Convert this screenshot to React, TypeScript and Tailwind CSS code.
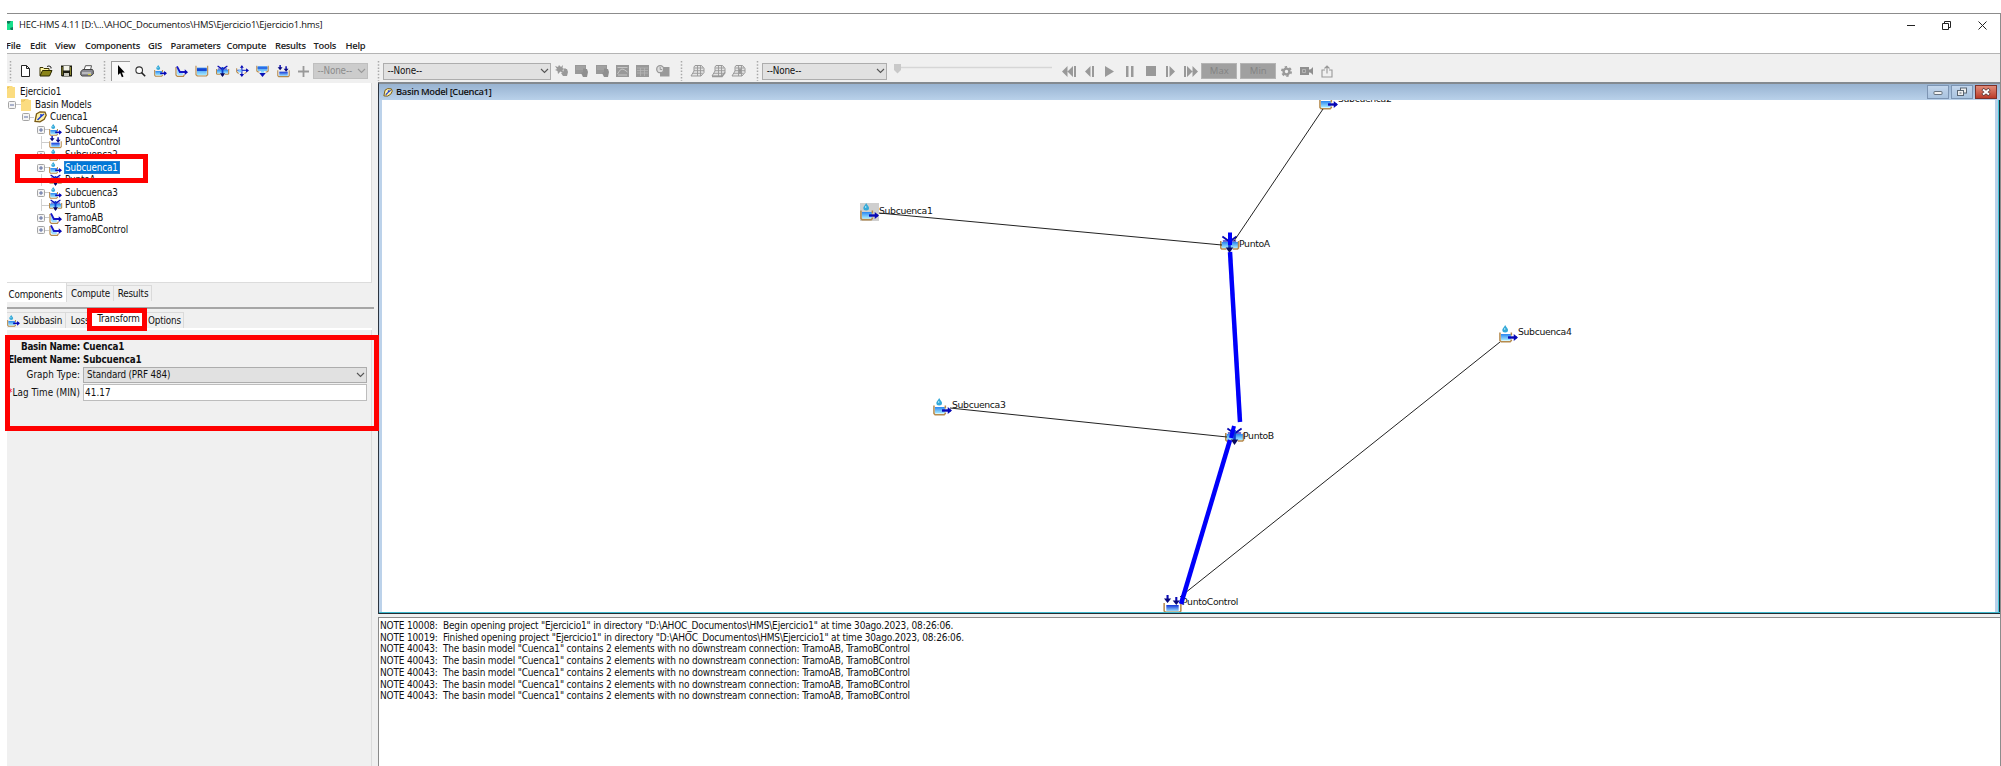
import React from "react";

const TAHOMA = "font-['DejaVu_Sans_Condensed','DejaVu_Sans',sans-serif] [font-stretch:condensed]";
const SEGOE = "font-['Open_Sans','Noto_Sans',sans-serif]";

type Kind = "subbasin" | "reach" | "reservoir" | "junction" | "diversion" | "source" | "sink";

function Defs() {
  return (
    <svg width="0" height="0" className="absolute">
      <defs>
        <linearGradient id="water" x1="0" y1="0" x2="0" y2="1">
          <stop offset="0" stopColor="#2a86f0" />
          <stop offset="1" stopColor="#a8ecff" />
        </linearGradient>
        <linearGradient id="deep" x1="0" y1="0" x2="0" y2="1">
          <stop offset="0" stopColor="#1233d8" />
          <stop offset="1" stopColor="#9fe4ff" />
        </linearGradient>
      </defs>
    </svg>
  );
}

function HydroIcon({ kind, w, h }: { kind: Kind; w: number; h: number }) {
  const tan = "#b58a4c";
  const navy = "#0808b4";
  return (
    <svg width={w} height={h} viewBox="0 0 20 18" preserveAspectRatio="none" className="block shrink-0 overflow-visible">
      {kind === "subbasin" && (
        <>
          <path d="M6.5 0C8 2.500 9.500 3.500 9.500 5a3 2.500 0 0 1-6 0C3.500 3.500 5 2.500 6.500 0Z" fill="#35a9d8" />
          <path d="M6 3.200v1.500" stroke="#c8f4ff" strokeWidth="1.200" />
          <rect x="2" y="9" width="10.500" height="6.500" fill="url(#water)" />
          <path d="M1 7.500v8l1.200 1.300h9.600l1.200-1.300v-1M13 7.500v3" fill="none" stroke={tan} strokeWidth="1.600" />
          <path d="M9.500 12.500h9" stroke={navy} strokeWidth="2.400" />
          <path d="M15.500 9l4.500 3.500-4.500 3.500Z" fill={navy} />
        </>
      )}
      {kind === "reach" && (
        <>
          <path d="M1.500 3v12l2 2h9.500l1.500-2.500" fill="none" stroke={tan} strokeWidth="1.800" />
          <path d="M3 3l4 7h5v5.500H5L3 13Z" fill="#9fdcff" />
          <path d="M3 2l4.500 8.500H18" fill="none" stroke="#1616c8" strokeWidth="2.800" />
          <path d="M15 6.500l5 4.200-5 4.200Z" fill={navy} />
        </>
      )}
      {kind === "reservoir" && (
        <>
          <rect x="3" y="4" width="15" height="11.500" fill="url(#water)" />
          <rect x="3" y="5" width="15" height="4" fill="#1746d0" />
          <path d="M1.500 1v13.500l2 2h14l2-2V1" fill="none" stroke={tan} strokeWidth="1.700" />
        </>
      )}
      {kind === "junction" && (
        <>
          <rect x="1.500" y="7" width="17.500" height="6" fill="url(#water)" />
          <path d="M.8 6v7l1 1h5M19.500 6v7l-1 1h-5" fill="none" stroke={tan} strokeWidth="1.600" />
          <path d="M2.500 1.500l7.500 5 7.500-5" fill="none" stroke={navy} strokeWidth="2" />
          <path d="M3 6h14" stroke={navy} strokeWidth="1.200" />
          <path d="M10 3v13" stroke="#0c3fd0" strokeWidth="2.800" />
          <path d="M6 12.500h8L10 18Z" fill="#080860" />
        </>
      )}
      {kind === "diversion" && (
        <>
          <path d="M9 1v15M2 8h16" stroke="#2c43cf" strokeWidth="2" />
          <path d="M6 4L9 .5l3 3.500M5.500 13.500h7L9 18ZM15.500 4.800l4.500 3.400-4.500 3.400Z" fill={navy} />
          <path d="M1 5v5l3 3M13 13l3-2" fill="none" stroke={tan} strokeWidth="1.600" />
          <rect x="3.500" y="7" width="5" height="4" fill="#7fc8ff" />
        </>
      )}
      {kind === "source" && (
        <>
          <path d="M2.500 2h15v7h-5v3h-5V9h-5Z" fill="url(#water)" />
          <path d="M2.500 3h15v3h-15Z" fill="#2c6de8" />
          <path d="M1.200 1v8l2 1.500h2M18.800 1v8l-2 1.500h-2" fill="none" stroke={tan} strokeWidth="1.600" />
          <path d="M5 12h10l-5 6Z" fill="#0a12b8" />
        </>
      )}
      {kind === "sink" && (
        <>
          <rect x="3.500" y="10" width="13" height="6.500" fill="url(#deep)" />
          <path d="M1.200 8v8l1.500 1.400h14.600l1.500-1.400V8" fill="none" stroke={tan} strokeWidth="1.600" />
          <path d="M4.800 0v5M14 2v5" stroke={navy} strokeWidth="2.200" />
          <path d="M1 3.500h7.600L4.800 8ZM10.200 5.500h7.600L14 10Z" fill="#07077c" />
        </>
      )}
    </svg>
  );
}

function Grip() {
  return (
    <svg width="3" height="22" className="block shrink-0">
      <path d="M1.500 1v20" stroke="#a9a9a9" strokeWidth="1.500" strokeDasharray="1.500 1.700" />
    </svg>
  );
}

function Cell({ children, w = "w-[20.300px]" }: { children: React.ReactNode; w?: string }) {
  return <div className={`flex h-[20px] shrink-0 items-center justify-center ${w}`}>{children}</div>;
}

function Chevron({ color }: { color: string }) {
  return (
    <svg width="9" height="6" className="block shrink-0">
      <path d="M1 1l3.500 3.500L8 1" fill="none" stroke={color} strokeWidth="1.100" />
    </svg>
  );
}

function Combo({ w, className = "" }: { w: string; className?: string }) {
  return (
    <div className={`flex h-[17px] shrink-0 items-center justify-between border border-[#adadad] bg-[#e1e1e1] pl-[3.500px] pr-[1px] text-[#111] ${w} ${className}`}>
      <span className={`${TAHOMA} text-[9.800px] tracking-[-0.150px]`}>--None--</span>
      <Chevron color="#555" />
    </div>
  );
}

const G = "#999";

function Toolbar() {
  const kinds: Kind[] = ["subbasin", "reach", "reservoir", "junction", "diversion", "source", "sink"];
  return (
    <div className="flex h-[29px] items-center bg-[#f0f0f0] pt-[5px]">
      <div className="flex w-[369.500px] shrink-0 items-center pl-[1.500px]">
        <Grip />
        <div className="w-[4px]" />
        <Cell>
          <svg width="9" height="12"><path d="M.5.5h5l3 3v8h-8ZM5.500.5v3h3" fill="#fff" stroke="#222" /></svg>
        </Cell>
        <Cell w="w-[20.800px]">
          <svg width="14" height="12"><path d="M1 10.500v-8h3l1 1h5v2" fill="#fff6a0" stroke="#3a3300" /><path d="M1 11l2.500-5.500H13L10.500 11Z" fill="#8a8418" stroke="#2b2800" /><path d="M8 1.500q2-1.500 4 .5v1.500" fill="none" stroke="#222" /></svg>
        </Cell>
        <Cell>
          <svg width="11" height="12"><path d="M0 .5h11v11H1L0 10.500Z" fill="#1c1c12" /><rect x="2.500" y="1" width="6" height="4.500" fill="#f3f3e8" /><rect x="3" y="8" width="5" height="3" fill="#c9c9c0" /><path d="M9.500 2v8M1.200 2v8" stroke="#8b8730" /></svg>
        </Cell>
        <Cell>
          <svg width="14" height="12"><path d="M4 5L5.500 .7h6L10.500 5" fill="#fff" stroke="#555" /><path d="M.8 6.500L3 4.500h9.500L13.300 6v3l-2.500 2H2L.8 10Z" fill="#8a8a92" stroke="#444" /><path d="M2 8h9" stroke="#e8e8e8" /><path d="M8 9.500h3" stroke="#d4cf40" strokeWidth="1.200" /></svg>
        </Cell>
        <div className="w-[6px]" />
        <Grip />
        <div className="w-[4.500px]" />
        <div className="flex h-[20px] w-[19px] shrink-0 items-center justify-center border-l border-t border-[#9a9a9a] bg-[#f8f8f8]">
          <svg width="8" height="13"><path d="M1 0v10l2.200-2 1.700 4.300 1.600-.7L4.800 7.500h3Z" fill="#000" /></svg>
        </div>
        <Cell w="w-[21px]">
          <svg width="11" height="11"><circle cx="4.200" cy="4.200" r="3.300" fill="#fdfdfd" stroke="#333" strokeWidth="1.100" /><path d="M6.600 6.600l3.600 3.600" stroke="#222" strokeWidth="1.500" /></svg>
        </Cell>
        {kinds.map((k) => (
          <Cell key={k} w="w-[20.400px]"><HydroIcon kind={k} w={13} h={12} /></Cell>
        ))}
        <Cell w="w-[20px]">
          <svg width="11" height="11"><path d="M5.500 0v11M0 5.500h11" stroke={G} strokeWidth="1.800" /></svg>
        </Cell>
        <div className="flex h-[16px] w-[55px] shrink-0 items-center justify-between border border-[#bfbfbf] bg-[#cccccc] pl-[3px] pr-[1px] text-[#8b8b8b]">
          <span className={`${TAHOMA} text-[9.800px] tracking-[-0.150px]`}>--None--</span>
          <Chevron color="#999" />
        </div>
      </div>
      <Grip />
      <div className="w-[3.500px]" />
      <Combo w="w-[168px]" />
      <div className="w-[.5px]" />
      <Cell>
        <svg width="14" height="12"><path d="M0 1l3 1 1-2 2 2 2-2-.5 3 2 1-2 1 1 3-3-1.500L3 9l-.5-3L0 5l2-1Z" fill={G} /><path d="M9 4l1-1 1 1h1l1 3-1 4H8L6 8l2-1Z" fill={G} /></svg>
      </Cell>
      {[0, 1].map((i) => (
        <Cell key={i}>
          <svg width="13" height="12"><rect y="0" width="11" height="9" fill={G} /><path d="M1 2h9M1 4h9" stroke="#bbb" strokeWidth=".6" /><path d="M6 8l2-1V4l1-1 1 1h2l1 3-1 5H8Z" fill="#8f8f8f" /></svg>
        </Cell>
      ))}
      <Cell>
        <svg width="13" height="12"><rect width="13" height="12" fill={G} /><path d="M1.500 9Q4 4 6 4t5.500 3M1.500 2.500h10M2 10h9" fill="none" stroke="#d0d0d0" strokeWidth=".8" /></svg>
      </Cell>
      <Cell>
        <svg width="13" height="12"><rect width="13" height="12" fill={G} /><path d="M1 3h11M1 5.500h11M1 8h11M4.500 3v8M8.500 3v8" stroke="#b9b9b9" strokeWidth=".7" /></svg>
      </Cell>
      <Cell>
        <svg width="14" height="12"><rect x="4" y="2" width="9.500" height="9.500" fill={G} /><circle cx="4.200" cy="4.200" r="3.500" fill="#ddd" stroke={G} strokeWidth="1.300" /><path d="M4.200 2v2.500h2" fill="none" stroke={G} /></svg>
      </Cell>
      <div className="w-[7px]" />
      <Grip />
      <div className="w-[4.500px]" />
      {[0, 1, 2].map((i) => (
        <Cell key={i}>
          <svg width="15" height="14"><path d="M5 1.500h6.500l2.500 3v4l-3 3.500H1L4 7V3Z" fill="#e4e4e4" stroke={G} /><path d="M4.500 4h9M4 6.700h10M3 9.300h9.500M7.500 1.500V12M10.500 1.500V12" stroke={G} strokeWidth=".9" />{i === 1 && <path d="M1 12.500h10l3-4" fill="none" stroke={G} strokeWidth="1.500" />}{i === 2 && <path d="M9 4.500v5" stroke="#888" strokeWidth="1.500" />}</svg>
        </Cell>
      ))}
      <div className="w-[7px]" />
      <Grip />
      <div className="w-[3.500px]" />
      <Combo w="w-[125px]" />
      <div className="w-[6px]" />
      <svg width="160" height="20" className="block shrink-0">
        <path d="M7 6.500h152" stroke="#d6d6d6" strokeWidth="1.500" />
        <path d="M1 3h7v6l-3.500 3.500L1 9Z" fill="#c9c9c9" />
      </svg>
      <div className="w-[6px]" />
      <Cell><svg width="14" height="11"><path d="M0 5.500L5.500 0v11ZM5.500 5.500L11 0v11ZM12 0h2v11h-2Z" fill={G} /></svg></Cell>
      <Cell><svg width="9" height="11"><path d="M0 5.500L5.500 0v11ZM7 0h2v11H7Z" fill={G} /></svg></Cell>
      <Cell><svg width="9" height="11"><path d="M0 0l9 5.500L0 11Z" fill={G} /></svg></Cell>
      <Cell><svg width="8" height="11"><path d="M0 0h2.500v11H0ZM5 0h2.500v11H5Z" fill={G} /></svg></Cell>
      <Cell><svg width="10" height="10"><path d="M0 0h10v10H0Z" fill={G} /></svg></Cell>
      <Cell><svg width="9" height="11"><path d="M9 5.500L3.500 0v11ZM0 0h2v11H0Z" fill={G} /></svg></Cell>
      <Cell><svg width="14" height="11"><path d="M14 5.500L8.500 0v11ZM8.500 5.500L3 0v11ZM0 0h2v11H0Z" fill={G} /></svg></Cell>
      {["Max", "Min"].map((t) => (
        <div key={t} className={`mr-[3px] flex h-[16px] w-[36px] shrink-0 items-center justify-center border border-[#b4b4b4] bg-[#a0a0a0] text-[9.500px] text-[#838383] ${SEGOE}`}>{t}</div>
      ))}
      <Cell w="w-[15px]">
        <svg width="11" height="11" viewBox="0 0 11 11"><circle cx="5.500" cy="5.500" r="2.900" fill="none" stroke={G} strokeWidth="2.400" /><circle cx="5.500" cy="5.500" r="4.600" fill="none" stroke={G} strokeWidth="1.800" strokeDasharray="2.400 2.417" /></svg>
      </Cell>
      <div className="w-[2.500px]" />
      <Cell>
        <svg width="14" height="10"><path d="M0 1h9v8H0ZM9 5l4-4v8Z" fill="#8f8f8f" /><path d="M8 3.500h3v3H8Z" fill="#8f8f8f" /><path d="M2.500 3.500h3v3h-3Z" fill="none" stroke="#c5c5c5" strokeWidth=".7" /></svg>
      </Cell>
      <Cell>
        <svg width="12" height="13"><path d="M4 5H1v7h10V5H8M6 8.500V1M3.500 3.500L6 1l2.500 2.500" fill="none" stroke={G} strokeWidth="1.100" /></svg>
      </Cell>
    </div>
  );
}

function Expander({ open }: { open?: boolean }) {
  return (
    <svg width="8" height="8" className="block shrink-0">
      <rect x=".5" y=".5" width="7" height="7" rx="1" fill="#f4f4f4" stroke="#a4a4a4" />
      <path d={open ? "M2 4h4" : "M2 4h4M4 2v4"} stroke="#4f619a" strokeWidth=".9" />
    </svg>
  );
}

function Folder() {
  return (
    <svg width="10" height="12" className="block shrink-0">
      <path d="M0 0h7l1 1h2v11H0Z" fill="#fbdc80" />
      <path d="M0 2h3l1-1.500" fill="none" stroke="#e8bf52" />
    </svg>
  );
}

function BasinIcon({ w = 13 }: { w?: number }) {
  return (
    <svg width={w} height={w - 1} viewBox="0 0 13 12" className="block shrink-0">
      <path d="M1 10.500L2.500 3 6 .8l5 .4 1.200 3-2 4L6 10.800Z" fill="#fff1a8" stroke="#7a5a14" strokeWidth="1.300" />
      <path d="M3.500 9L7 5.500V3M7 5.500L10 3" fill="none" stroke="#1c3ed0" strokeWidth="1.500" />
    </svg>
  );
}

const treeItems: { label: string; kind: Kind; leaf?: boolean; selected?: boolean }[] = [
  { label: "Subcuenca4", kind: "subbasin" },
  { label: "PuntoControl", kind: "sink", leaf: true },
  { label: "Subcuenca2", kind: "subbasin" },
  { label: "Subcuenca1", kind: "subbasin", selected: true },
  { label: "PuntoA", kind: "junction", leaf: true },
  { label: "Subcuenca3", kind: "subbasin" },
  { label: "PuntoB", kind: "junction", leaf: true },
  { label: "TramoAB", kind: "reach" },
  { label: "TramoBControl", kind: "reach" },
];

function Tree() {
  const t = "whitespace-nowrap text-[9.800px] leading-[12px] tracking-[-0.130px] text-[#111]";
  return (
    <div className={`h-[200px] w-[365px] border-b border-r border-[#dcdcdc] bg-white pt-[3px] ${TAHOMA}`}>
      <div className="flex h-[12.550px] items-center">
        <div className="-ml-[2px]"><Folder /></div>
        <span className={`${t} ml-[5px]`}>Ejercicio1</span>
      </div>
      <div className="flex h-[12.550px] items-center pl-[1px]">
        <Expander open />
        <div className="h-px w-[5px] bg-[#ccc]" />
        <Folder />
        <span className={`${t} ml-[4px]`}>Basin Models</span>
      </div>
      <div className="flex h-[12.550px] items-center pl-[15px]">
        <Expander open />
        <div className="h-px w-[4px] bg-[#ccc]" />
        <BasinIcon />
        <span className={`${t} ml-[3px]`}>Cuenca1</span>
      </div>
      {treeItems.map((it) => (
        <div key={it.label} className="flex h-[12.550px] items-center pl-[30px]">
          {it.leaf ? (
            <div className="flex h-full w-[8px] items-center pl-[4px]">
              <div className="h-full w-px bg-[#d2d2d2]" />
              <div className="h-px w-[4px] bg-[#ccc]" />
            </div>
          ) : (
            <Expander />
          )}
          <div className="h-px w-[4px] bg-[#ccc]" />
          <HydroIcon kind={it.kind} w={13} h={12} />
          <span className={it.selected ? "ml-[2px] h-[12.500px] whitespace-nowrap border border-[#2a7fd0] bg-[#0078d7] pr-[1px] text-[9.800px] leading-[11px] tracking-[-0.130px] text-white" : `${t} ml-[3px]`}>
            {it.label}
          </span>
        </div>
      ))}
    </div>
  );
}

function LeftPanel() {
  const txt = "text-[9.800px] tracking-[-0.150px] leading-[12px] text-[#111] whitespace-nowrap";
  const tab = "flex shrink-0 items-center justify-center border-r border-t border-[#dadada]";
  return (
    <div className={`flex w-[371px] shrink-0 flex-col bg-[#f0f0f0] ${TAHOMA} ${txt}`}>
      <Tree />
      <div className="flex h-[24px] items-start">
        <div className="flex h-[19px] w-[60px] items-center border-r border-[#dadada] bg-white pl-[1.500px] pt-[5px] tracking-[-0.200px]">Components</div>
        <div className={`${tab} mt-[2px] h-[16px] w-[47px] pl-px`}>Compute</div>
        <div className={`${tab} mt-[2px] h-[16px] w-[38px] pl-px`}>Results</div>
      </div>
      <div className="h-[2px] w-[367px] bg-[#a6a6a6]" />
      <div className="flex h-[19px] items-end">
        <div className={`${tab} h-[16px] w-[59px] gap-[3px] pr-[3px]`}>
          <HydroIcon kind="subbasin" w={13} h={12} />
          <span>Subbasin</span>
        </div>
        <div className={`${tab} h-[16px] w-[26px] pl-[3px]`}>Loss</div>
        <div className="flex h-[19px] w-[50px] items-center justify-center bg-white pl-[3px] pt-[1px]">Transform</div>
        <div className={`${tab} h-[16px] w-[42px] pl-[4px]`}>Options</div>
      </div>
      <div className="h-[2px] w-[365px] bg-white" />
      <div className="flex w-[365px] grow flex-col border-r border-[#dcdcdc] pt-[10px]">
        <div className="flex h-[13px] items-center font-bold tracking-[-0.300px]">
          <span className="w-[73px] text-right">Basin Name:</span>
          <span className="ml-[3px] tracking-[-0.150px]">Cuenca1</span>
        </div>
        <div className="flex h-[13px] items-center font-bold tracking-[-0.300px]">
          <span className="flex w-[73px] justify-end">Element Name:</span>
          <span className="ml-[3px] tracking-[-0.150px]">Subcuenca1</span>
        </div>
        <div className="flex h-[17px] items-center">
          <span className="w-[73px] text-right tracking-[.05px]">Graph Type:</span>
          <div className="ml-[3px] flex h-[16px] w-[284px] items-center justify-between border border-[#adadad] bg-[#e1e1e1] pl-[3px] pr-[1px]">
            <span>Standard (PRF 484)</span>
            <Chevron color="#555" />
          </div>
        </div>
        <div className="mt-[1px] flex h-[17px] items-center">
          <span className="flex w-[73px] justify-end tracking-[.05px]"><span className="text-[#f00]">*</span>Lag Time (MIN)</span>
          <div className="ml-[3px] flex h-[17px] w-[284px] items-center border border-[#bdbdbd] bg-white pl-[1px] tracking-[.1px]">41.17</div>
        </div>
      </div>
    </div>
  );
}

const nodes: { label: string; kind: Kind; x: number; y: number; lx: number; ly: number; selected?: boolean }[] = [
  { label: "Subcuenca1", kind: "subbasin", x: 478, y: 102, lx: 497, ly: 110, selected: true },
  { label: "Subcuenca2", kind: "subbasin", x: 937, y: -9, lx: 956, ly: -2 },
  { label: "PuntoA", kind: "junction", x: 838, y: 134, lx: 857, ly: 143 },
  { label: "PuntoB", kind: "junction", x: 843, y: 326, lx: 861, ly: 335 },
  { label: "Subcuenca3", kind: "subbasin", x: 551, y: 297, lx: 570, ly: 304 },
  { label: "Subcuenca4", kind: "subbasin", x: 1117, y: 224, lx: 1136, ly: 231 },
  { label: "PuntoControl", kind: "sink", x: 781, y: 494, lx: 800, ly: 501 },
];

function BasinCanvas() {
  return (
    <div className="h-[512px] w-[1613px] shrink-0 overflow-hidden bg-white pt-px">
      <div className="relative h-[511px] w-[1613px]">
        {nodes.map((n) => (
          <React.Fragment key={n.label}>
            <div className={n.selected ? "absolute bg-[#cfcfcf]" : "absolute"} style={{ left: n.x, top: n.y }}>
              <HydroIcon kind={n.kind} w={19} h={18} />
            </div>
            <div className="absolute -translate-y-1/2 whitespace-nowrap text-[9.300px] leading-[12px] tracking-[-0.350px] text-[#111] font-['DejaVu_Sans',sans-serif]" style={{ left: n.lx, top: n.ly }}>
              {n.label}
            </div>
          </React.Fragment>
        ))}
        <svg width="1613" height="511" className="absolute inset-0">
          <g stroke="#222" strokeWidth="1" fill="none">
            <path d="M497 112L840 144M941 8L852 140M568 307L845 336M798 496L1118 241" />
          </g>
          <g stroke="#0000fa" fill="none">
            <path d="M848 151L858 321" strokeWidth="4.500" />
            <path d="M848 339L799 503" strokeWidth="4.500" />
            <path d="M848 131.500V144M852 325L849 337" strokeWidth="4" />
          </g>
        </svg>
      </div>
    </div>
  );
}

function MdiButton({ kind }: { kind: "min" | "restore" | "close" }) {
  const cls =
    kind === "close"
      ? "bg-linear-to-b from-[#e08a78] to-[#bb3a28] border-[#7c3028]"
      : "bg-linear-to-b from-[#c3d6ec] to-[#a9c3df] border-[#7d95b3]";
  return (
    <div className={`flex h-[14px] w-[22px] items-center justify-center border ${cls}`}>
      <svg width="12" height="10">
        {kind === "min" && <rect x="2" y="4.500" width="8" height="3" rx=".5" fill="#f2f2f2" stroke="#5a6673" strokeWidth=".9" />}
        {kind === "restore" && (
          <g fill="#eee" stroke="#5a6673" strokeWidth="1"><rect x="4.500" y="1" width="6" height="5" /><rect x="1.500" y="3.500" width="6" height="5" /><path d="M3.500 6h2" /></g>
        )}
        {kind === "close" && <><path d="M2.500 2l7 6M9.500 2l-7 6" stroke="#5a3a3a" strokeWidth="3.400" /><path d="M3 2.500l6 5M9 2.500l-6 5" stroke="#fff" strokeWidth="2" /></>}
      </svg>
    </div>
  );
}

const notes = [
  'NOTE 10008:  Begin opening project "Ejercicio1" in directory "D:\\AHOC_Documentos\\HMS\\Ejercicio1" at time 30ago.2023, 08:26:06.',
  'NOTE 10019:  Finished opening project "Ejercicio1" in directory "D:\\AHOC_Documentos\\HMS\\Ejercicio1" at time 30ago.2023, 08:26:06.',
  ...Array.from({ length: 5 }, () => 'NOTE 40043:  The basin model "Cuenca1" contains 2 elements with no downstream connection: TramoAB, TramoBControl'),
];

function MainArea() {
  return (
    <div className="-mt-px flex min-w-0 grow flex-col">
      <div className="flex h-[532px] flex-col border-l border-t-2 border-[#2c3440] border-t-[#848a90]">
        <div className="flex h-[16px] shrink-0 items-center bg-linear-to-b from-[#98b3d1] to-[#b9d1ea] pl-[4px] pr-[3px]">
          <BasinIcon w={10} />
          <span className={`ml-[3px] grow text-[9.400px] font-semibold leading-[14px] tracking-[-0.350px] text-[#111] ${SEGOE}`}>Basin Model [Cuenca1]</span>
          <div className="flex gap-[2px]">
            <MdiButton kind="min" />
            <MdiButton kind="restore" />
            <MdiButton kind="close" />
          </div>
        </div>
        <div className="flex h-[512px] shrink-0">
          <div className="w-[3px] shrink-0 bg-[#bcd2ea]" />
          <BasinCanvas />
          <div className="grow border-r border-[#222c33] bg-[#b9d1ea]">
            <div className="ml-auto h-full w-px bg-[#45c8dc]" />
          </div>
        </div>
        <div className="h-px shrink-0 bg-[#3fb8cc]" />
        <div className="h-px shrink-0 bg-[#222c33]" />
      </div>
      <div className="h-[3px] bg-[#f0f0f0]" />
      <div className={`grow whitespace-pre border-l border-t border-[#8a8a8a] bg-white pl-[1px] pt-[2px] text-[10px] leading-[11.700px] tracking-[-0.170px] text-[#111] ${TAHOMA}`}>
        {notes.map((n, i) => (
          <div key={i}>{n}</div>
        ))}
      </div>
    </div>
  );
}

const menu: [string, string][] = [
  ["File", "w-[24px]"],
  ["Edit", "w-[25px]"],
  ["View", "w-[30px]"],
  ["Components", "w-[63px]"],
  ["GIS", "w-[22.500px]"],
  ["Parameters", "w-[56px]"],
  ["Compute", "w-[48.500px]"],
  ["Results", "w-[38.500px]"],
  ["Tools", "w-[32px]"],
  ["Help", "w-[30px]"],
];

export default function App() {
  return (
    <div className="relative h-[766px] w-[2001px] overflow-hidden bg-white pl-[7px] pt-[13px]">
      <Defs />
      <div className="flex h-[753px] w-[1994px] flex-col overflow-hidden border-r border-t border-[#8c8c8c]">
        <div className="flex h-[23px] shrink-0 items-center">
          <svg width="6" height="9" className="block"><rect width="6" height="9" fill="#18e08c" /><path d="M0 0h4L2 3 0 2ZM6 6L3 7l1 2h2Z" fill="#107858" /></svg>
          <span className={`ml-[6px] grow text-[9.400px] tracking-[-0.180px] text-[#111] ${SEGOE}`}>HEC-HMS 4.11 [D:\...\AHOC_Documentos\HMS\Ejercicio1\Ejercicio1.hms]</span>
          <div className="flex items-center gap-[27px] pr-[13px]">
            <svg width="8" height="9"><path d="M0 4.500h8" stroke="#222" /></svg>
            <svg width="9" height="9"><path d="M.5 2.500h6v6h-6ZM2.500 2.500v-2h6v6h-2" fill="none" stroke="#222" /></svg>
            <svg width="9" height="9"><path d="M.5.5l8 8M8.500.5l-8 8" stroke="#222" /></svg>
          </div>
        </div>
        <div className="-ml-[1px] flex h-[17px] shrink-0 items-center border-b border-[#b4b4b4] pt-px">
          {menu.map(([label, w]) => (
            <span key={label} className={`shrink-0 text-[9.400px] font-semibold leading-[14px] tracking-[-0.280px] text-[#222] ${SEGOE} ${w}`}>{label}</span>
          ))}
        </div>
        <Toolbar />
        <div className="flex min-h-0 grow">
          <LeftPanel />
          <MainArea />
        </div>
      </div>
      <div className="absolute left-[15px] top-[154px] h-[29px] w-[133px] border-[5px] border-[#ff0000]" />
      <div className="absolute left-[87px] top-[308px] h-[23px] w-[60px] border-[5px] border-[#ff0000]" />
      <div className="absolute left-[5px] top-[335px] h-[96px] w-[374px] border-[5px] border-[#ff0000]" />
    </div>
  );
}
